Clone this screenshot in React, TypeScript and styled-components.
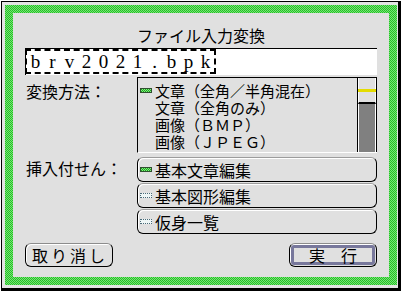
import React from 'react';
import styled, { createGlobalStyle } from 'styled-components';

const GlobalStyle = createGlobalStyle`
  body {
    margin: 0;
    background: #fff;
    font-family: "Noto Sans CJK JP", "Noto Sans", sans-serif;
    color: #000;
  }
`;

const methods = [
  '文章（全角／半角混在）',
  '文章（全角のみ）',
  '画像（ＢＭＰ）',
  '画像（ＪＰＥＧ）'
];

const stickies = ['基本文章編集', '基本図形編集', '仮身一覧'];

const fileName = 'brv2021.bpk';

const App = () => {
  return (
    <>
      <GlobalStyle />
      <Window>
        <GreenFrame>
          <Content>
            <Title>ファイル入力変換</Title>
            <Field>
              <Selection>
                {fileName.split('').map((ch, i) => (
                  <Cell key={i}>{ch}</Cell>
                ))}
              </Selection>
            </Field>
            <Row $gap={2}>
              <Label $top={6}>変換方法：</Label>
              <ListBox>
                <Items>
                  {methods.map((m, i) => (
                    <Item key={m}>
                      <Marker $on={i === 0} $hidden={i !== 0} />
                      {m}
                    </Item>
                  ))}
                </Items>
                <Scrollbar>
                  <Thumb>
                    <YellowBar />
                  </Thumb>
                  <Track />
                </Scrollbar>
              </ListBox>
            </Row>
            <Row $gap={4}>
              <Label $top={3}>挿入付せん：</Label>
              <StickyList>
                {stickies.map((s, i) => (
                  <StickyButton key={s}>
                    <Marker $on={i === 0} />
                    {s}
                  </StickyButton>
                ))}
              </StickyList>
            </Row>
            <ButtonRow>
              <PushButton>
                <CancelText>取り消し</CancelText>
              </PushButton>
              <PushButton>
                <DefaultRing>実　行</DefaultRing>
              </PushButton>
            </ButtonRow>
          </Content>
        </GreenFrame>
      </Window>
    </>
  );
};

const Window = styled.div`
  margin: 1px 0 0 1px;
  width: 400px;
  height: 290px;
  box-sizing: border-box;
  border-style: solid;
  border-color: #000;
  border-width: 1px 3px 3px 1px;
  padding: 3px 1px 3px 3px;
  background: #e4e4e4;
`;

const GreenFrame = styled.div`
  height: 100%;
  box-sizing: border-box;
  padding: 8px;
  background-color: #40cc40;
  background-image: conic-gradient(#74e874 25%, #28bc28 0 50%, #74e874 0 75%, #28bc28 0);
  background-size: 2px 2px;
`;

const Content = styled.div`
  height: 100%;
  box-sizing: border-box;
  background: #e0e0e0;
  padding: 13px 12px 0;
  display: flex;
  flex-direction: column;
`;

const Title = styled.div`
  height: 18px;
  line-height: 18px;
  font-size: 16px;
  text-align: center;
`;

const Field = styled.div`
  margin-top: 4px;
  height: 27px;
  box-sizing: border-box;
  background: #fff;
  border-top: 1px solid #000;
  border-left: 1px solid #000;
  display: flex;
`;

const Selection = styled.div`
  height: 25px;
  box-sizing: border-box;
  margin-left: -1px;
  border: 2px dashed #000;
  display: flex;
  align-items: center;
`;

const Cell = styled.span`
  display: inline-block;
  width: 17px;
  text-align: center;
  font-family: "Liberation Serif", serif;
  font-size: 19px;
  line-height: 21px;
`;

const Row = styled.div<{ $gap: number }>`
  margin-top: ${({ $gap }) => $gap}px;
  display: flex;
`;

const Label = styled.div<{ $top: number }>`
  width: 112px;
  padding: ${({ $top }) => $top}px 0 0 1px;
  box-sizing: border-box;
  font-size: 16px;
  line-height: 17px;
`;

const ListBox = styled.div`
  width: 240px;
  height: 76px;
  box-sizing: border-box;
  border-top: 1px solid #000;
  border-left: 1px solid #000;
  border-bottom: 1px solid #fff;
  display: flex;
`;

const Items = styled.div`
  flex: 1;
  padding-top: 4px;
  overflow: hidden;
`;

const Item = styled.div`
  display: flex;
  align-items: center;
  height: 17px;
  line-height: 17px;
  font-size: 15px;
  white-space: nowrap;
`;

const Marker = styled.span<{ $on?: boolean; $hidden?: boolean }>`
  width: 12px;
  height: 5px;
  box-sizing: border-box;
  margin: 0 3px 0 2px;
  flex-shrink: 0;
  visibility: ${({ $hidden }) => ($hidden ? 'hidden' : 'visible')};
  border: 1px ${({ $on }) => ($on ? 'solid #305030' : 'dotted #4a6a78')};
  background-color: ${({ $on }) => ($on ? '#3cc83c' : '#eef6f6')};
  background-image: ${({ $on }) =>
    $on ? 'conic-gradient(#80f080 25%, #20a020 0 50%, #80f080 0 75%, #20a020 0)' : 'none'};
  background-size: 2px 2px;
`;

const Scrollbar = styled.div`
  width: 20px;
  box-sizing: border-box;
  border-left: 1px solid #000;
  border-right: 1px solid #000;
  display: flex;
  flex-direction: column;
`;

const Thumb = styled.div`
  height: 26px;
  box-sizing: border-box;
  background: #e0e0e0;
  border-left: 1px solid #fff;
  border-right: 1px solid #fff;
  border-bottom: 2px solid #000;
  padding-top: 11px;
`;

const YellowBar = styled.div`
  height: 3px;
  margin: 0 -1px;
  background: #e4dc00;
`;

const Track = styled.div`
  flex: 1;
  background: #808080;
  border-left: 1px solid #fff;
  border-right: 1px solid #fff;
`;

const StickyList = styled.div`
  display: flex;
  flex-direction: column;
  gap: 1px;
`;

const StickyButton = styled.div`
  width: 240px;
  height: 25px;
  box-sizing: border-box;
  display: flex;
  align-items: center;
  font-size: 16px;
  line-height: 20px;
  background: #e0e0e0;
  border: 1px solid #000;
  border-top-color: #9c9c9c;
  border-radius: 6px;
  box-shadow: inset 1px 1px 0 #fff;
`;

const ButtonRow = styled.div`
  margin-top: 9px;
  display: flex;
  justify-content: space-between;
`;

const PushButton = styled.div`
  width: 88px;
  height: 24px;
  box-sizing: border-box;
  padding: 1px;
  display: flex;
  background: #e0e0e0;
  border: 1px solid #000;
  border-top-color: #8c8c8c;
  border-radius: 6px;
  box-shadow: inset 1px 1px 0 #fff;
`;

const CancelText = styled.span`
  flex: 1;
  text-align: center;
  font-size: 16px;
  line-height: 20px;
  letter-spacing: 3px;
  padding-left: 2px;
`;

const DefaultRing = styled.span`
  flex: 1;
  box-sizing: border-box;
  border: 3px solid #78789c;
  border-radius: 3px;
  text-align: center;
  font-size: 16px;
  line-height: 14px;
`;

export default App;
